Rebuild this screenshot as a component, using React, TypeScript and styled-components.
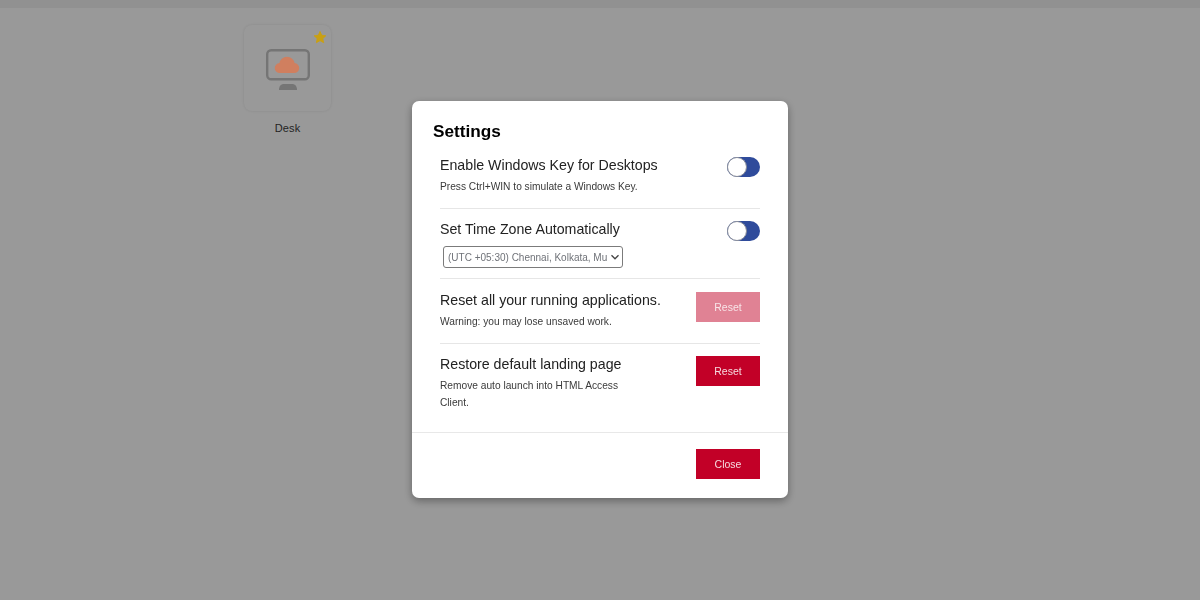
import styled, { createGlobalStyle } from 'styled-components'

const Global = createGlobalStyle`
	html, body {
		margin: 0;
		padding: 0;
		height: 100%;
		background: #fff;
		font-family: 'Liberation Sans', Arial, sans-serif;
	}
`

const TopBar = styled.div`
	height: 8px;
	background: #f2f2f2;
`

const Launcher = styled.main`
	padding: 17px 0 0 244px;
`

const Tile = styled.div`
	width: 87px;
	display: flex;
	flex-direction: column;
	align-items: center;
`

const TileCard = styled.div`
	position: relative;
	width: 87px;
	height: 86px;
	box-sizing: border-box;
	background: #fff;
	border-radius: 8px;
	box-shadow: 0 0 3px rgba(0, 0, 0, 0.1);
	display: flex;
	align-items: center;
	justify-content: center;
`

const Star = styled.svg`
	position: absolute;
	z-index: 1;
	top: 5px;
	right: 4px;
`

const IconArt = styled.svg`
	position: relative;
	z-index: 1;
	margin-top: 2px;
`

const TileName = styled.div`
	margin-top: 11px;
	font-size: 11px;
	line-height: 13px;
	color: #3c3c3c;
	letter-spacing: 0.1px;
`

const Overlay = styled.div`
	position: fixed;
	inset: 0;
	background: rgba(0, 0, 0, 0.4);
	display: flex;
	justify-content: center;
	align-items: flex-start;
`

const Modal = styled.section`
	position: relative;
	z-index: 2;
	width: 376px;
	height: 397px;
	margin-top: 101px;
	box-sizing: border-box;
	background: #fff;
	border-radius: 7px;
	box-shadow: 0 3px 9px rgba(0, 0, 0, 0.35);
	display: flex;
	flex-direction: column;
`

const Title = styled.h2`
	margin: 0;
	padding: 20px 21px 0;
	font-size: 17.2px;
	line-height: 21px;
	font-weight: 700;
	color: #000;
`

const Body = styled.div`
	padding: 0 28px;
	height: 290px;
	box-sizing: border-box;
`

const Row = styled.div<{ $height: number; $top: number; $last?: boolean }>`
	height: ${(p) => p.$height}px;
	box-sizing: border-box;
	display: flex;
	justify-content: space-between;
	align-items: flex-start;
	padding-top: ${(p) => p.$top}px;
	border-bottom: ${(p) => (p.$last ? 'none' : '1px solid #e6e6e6')};
`

const Text = styled.div`
	width: 228px;
`

const Heading = styled.div`
	font-size: 14.2px;
	line-height: 20px;
	color: #222;
	white-space: nowrap;
`

const Sub = styled.div`
	margin-top: 3px;
	font-size: 10.2px;
	line-height: 17px;
	color: #3a3a3a;
`

const Toggle = styled.div`
	width: 33px;
	height: 20px;
	margin-top: 2px;
	border-radius: 10px;
	background: #2f4b9b;
	position: relative;
	flex: none;
`

const Knob = styled.span`
	position: absolute;
	left: 0;
	top: 0;
	width: 20px;
	height: 20px;
	box-sizing: border-box;
	border-radius: 50%;
	background: #fff;
	border: 1.5px solid #8a8e99;
`

const Select = styled.div`
	margin: 7px 0 0 3px;
	width: 180px;
	height: 22px;
	box-sizing: border-box;
	border: 1px solid #7b7b7b;
	border-radius: 3px;
	padding: 0 2px 0 4px;
	display: flex;
	align-items: center;
	justify-content: space-between;
	font-size: 10px;
	color: #6f7278;
	white-space: nowrap;
	overflow: hidden;
`

const Chevron = styled.svg`
	flex: none;
`

const Button = styled.button<{ $faded?: boolean; $top?: number }>`
	width: 64px;
	height: 30px;
	margin-top: ${(p) => p.$top ?? 0}px;
	flex: none;
	border: none;
	border-radius: 0;
	padding: 0;
	background: ${(p) => (p.$faded ? '#e08294' : '#c20027')};
	color: ${(p) => (p.$faded ? '#f8e4e8' : '#f6d9df')};
	font-family: inherit;
	font-size: 10.5px;
`

const Footer = styled.footer`
	border-top: 1px solid #e8e8e8;
	padding: 16px 28px 0;
	display: flex;
	justify-content: flex-end;
`

function DeskIcon() {
	return (
		<IconArt width="46" height="42" viewBox="0 0 46 42">
			<rect x="2.200" y="2.200" width="41.600" height="29" rx="4" fill="none" stroke="#757575" strokeWidth="2.400" />
			<path
				d="M15 25a5 5 0 0 1-.5-10A7.600 7.600 0 0 1 29.500 15a5 5 0 0 1-.5 10z"
				fill="#d07f5f"
			/>
			<path d="M14 42c0-4 2-6 5-6h8c3 0 5 2 5 6z" fill="#757575" />
		</IconArt>
	)
}

export default function App() {
	return (
		<>
			<Global />
			<TopBar />
			<Launcher>
				<Tile>
					<TileCard>
						<Star width="14" height="14" viewBox="0 0 24 24">
							<path
								d="M12 2.500l3 6.500 7 .9-5.200 4.800 1.400 7L12 18.200l-6.200 3.500 1.400-7L2 9.900 9 9z"
								fill="#c9a012"
								stroke="#c9a012"
								strokeWidth="1.500"
								strokeLinejoin="round"
							/>
						</Star>
						<DeskIcon />
					</TileCard>
					<TileName>Desk</TileName>
				</Tile>
			</Launcher>
			<Overlay>
				<Modal>
					<Title>Settings</Title>
					<Body>
						<Row $height={67} $top={13}>
							<Text>
								<Heading>Enable Windows Key for Desktops</Heading>
								<Sub>Press Ctrl+WIN to simulate a Windows Key.</Sub>
							</Text>
							<Toggle>
								<Knob />
							</Toggle>
						</Row>
						<Row $height={70} $top={10}>
							<Text>
								<Heading>Set Time Zone Automatically</Heading>
								<Select>
									<span>(UTC +05:30) Chennai, Kolkata, Mu</span>
									<Chevron width="10" height="10" viewBox="0 0 10 10">
										<path d="M1.500 3.200L5 6.800l3.500-3.600" fill="none" stroke="#444" strokeWidth="1.300" />
									</Chevron>
								</Select>
							</Text>
							<Toggle>
								<Knob />
							</Toggle>
						</Row>
						<Row $height={65} $top={11}>
							<Text>
								<Heading>Reset all your running applications.</Heading>
								<Sub>Warning: you may lose unsaved work.</Sub>
							</Text>
							<Button $faded $top={2}>
								Reset
							</Button>
						</Row>
						<Row $height={88} $top={10} $last>
							<Text>
								<Heading>Restore default landing page</Heading>
								<Sub>
									Remove auto launch into HTML Access
									<br />
									Client.
								</Sub>
							</Text>
							<Button $top={2}>Reset</Button>
						</Row>
					</Body>
					<Footer>
						<Button>Close</Button>
					</Footer>
				</Modal>
			</Overlay>
		</>
	)
}
